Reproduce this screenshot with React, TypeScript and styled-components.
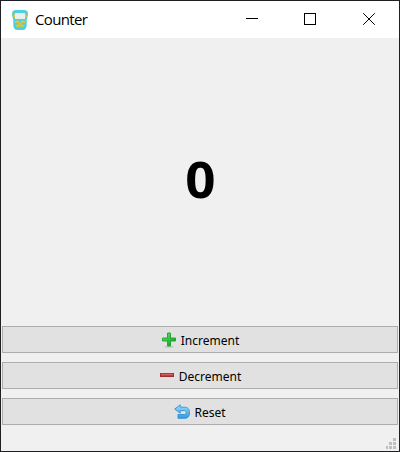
import React, { useState } from 'react';
import styled, { createGlobalStyle } from 'styled-components';

const GlobalStyle = createGlobalStyle`
  * { box-sizing: border-box; }
  body { margin: 0; overflow: hidden; }
`;

const Window = styled.div`
  display: flex;
  flex-direction: column;
  width: 400px;
  height: 452px;
  border: 1px solid #202024;
  background: #f0f0f0;
  color: #000;
`;

const TitleBar = styled.header`
  display: flex;
  align-items: center;
  height: 37px;
  flex: none;
  padding-left: 9px;
  background: #fff;
`;

const Title = styled.span`
  flex: 1;
  margin-left: 5px;
  padding-bottom: 2px;
  font: 15px/20px 'Open Sans', 'Noto Sans', sans-serif;
  letter-spacing: -0.65px;
`;

const Controls = styled.div`
  display: flex;
  margin-right: 1px;
`;

const ControlButton = styled.button<{ $inset: number }>`
  display: flex;
  align-items: center;
  justify-content: center;
  width: 58px;
  height: 37px;
  padding: 0 ${({ $inset }) => $inset}px 1px 0;
  border: 0;
  background: transparent;
`;

const Display = styled.main`
  display: flex;
  align-items: center;
  justify-content: center;
  flex: none;
  height: 288px;
  padding-bottom: 6px;
`;

const Value = styled.output`
  font: bold 50px/60px 'Noto Sans', sans-serif;
  transform: scaleX(1.06);
`;

const Actions = styled.div`
  display: flex;
  flex-direction: column;
  gap: 9px;
  padding: 0 1px;
`;

const ActionButton = styled.button`
  display: flex;
  align-items: center;
  justify-content: center;
  gap: 4px;
  height: 27px;
  padding: 0;
  border: 1px solid #adadad;
  background: #e1e1e1;
  color: #000;
`;

const Label = styled.span`
  font: 12px/16px 'Noto Sans', sans-serif;
  padding-top: 2px;
`;

const StatusBar = styled.footer`
  display: flex;
  flex: 1;
  align-items: flex-end;
  justify-content: flex-end;
  padding: 0 3px 2px 0;
`;

const Icon = styled.svg`
  display: block;
  flex: none;
`;

const AppIcon = () => (
  <Icon width="20" height="22" viewBox="0 0 20 22">
    <path d="M6 1H14Q18 1 18 5C18 8 16.700 9 16.700 12V16Q16.700 21 12.500 21H7.500Q3.300 21 3.300 16V12C3.300 9 2 8 2 5Q2 1 6 1Z" fill="#4dd0e1" />
    <path d="M3.300 5.200h2v3h-2zM14.700 5.200h2v3h-2z" fill="#ffc107" />
    <rect x="5" y="4" width="10" height="6" rx=".6" fill="#eceff1" />
    <path d="M5 11.700h4v2H5zM11 11.700h4v2h-4zM6.200 15.700h3.300v2H6.200zM10.500 15.700h3.300v2h-3.300zM8.500 13.700h3v2h-3z" fill="#ffc107" />
  </Icon>
);

const PlusIcon = () => (
  <Icon width="16" height="16" viewBox="0 0 16 16">
    <defs>
      <linearGradient id="plus" x1="0" y1="0" x2="1" y2="1">
        <stop offset="0" stopColor="#7fe08b" />
        <stop offset=".5" stopColor="#2fc13b" />
        <stop offset="1" stopColor="#16861c" />
      </linearGradient>
    </defs>
    <ellipse cx="8" cy="14.700" rx="5" ry=".8" fill="#bdbdbd" />
    <path d="M6.500 1h3v5h5v3h-5v5h-3V9h-5V6h5z" fill="url(#plus)" stroke="#27a637" />
  </Icon>
);

const MinusIcon = () => (
  <Icon width="16" height="16" viewBox="0 0 16 16">
    <rect x="1.500" y="5.500" width="13" height="3" fill="#c53c3c" stroke="#a52d30" />
    <path d="M2 6.300h12" stroke="#dd7777" strokeWidth=".8" />
  </Icon>
);

const UndoIcon = () => (
  <Icon width="16" height="16" viewBox="0 0 16 16">
    <defs>
      <linearGradient id="undo" x1="0" y1="0" x2="0" y2="1">
        <stop offset="0" stopColor="#9bdcff" />
        <stop offset="1" stopColor="#2e9be6" />
      </linearGradient>
    </defs>
    <path d="M6.200.8.7 5l5.500 4.200V6.600h4.300c1.200 0 1.700.6 1.700 1.900s-.6 2-1.900 2H4v3.800h7c3 0 4.500-2.200 4.500-5.500 0-3.900-1.800-5.600-5-5.600H6.200z" fill="url(#undo)" stroke="#2786cc" strokeWidth=".8" strokeLinejoin="round" />
  </Icon>
);

const SizeGrip = () => (
  <Icon width="10" height="11" viewBox="1 0 10 11" shapeRendering="crispEdges">
    <path d="M8 0h3v3H8zM4 4h3v3H4zM8 4h3v3H8zM1 8h2v3H1zM4 8h3v3H4zM8 8h3v3H8z" fill="#bfbfbf" />
  </Icon>
);

const controls = [
  { name: 'Minimize', path: 'M0 5.500h12', inset: 2 },
  { name: 'Maximize', path: 'M.5.5h11v11H.5z', inset: 2 },
  { name: 'Close', path: 'M.2.200l11.600 11.600M11.800.200.200 11.800', inset: 0 },
];

export default function App() {
  const [count, setCount] = useState(0);
  return (
    <>
      <GlobalStyle />
      <Window>
        <TitleBar>
          <AppIcon />
          <Title>Counter</Title>
          <Controls>
            {controls.map(({ name, path, inset }) => (
              <ControlButton key={name} aria-label={name} $inset={inset}>
                <Icon width="12" height="12" viewBox="0 0 12 12">
                  <path d={path} fill="none" stroke="#000" strokeWidth="1" shapeRendering={name === 'Close' ? 'auto' : 'crispEdges'} />
                </Icon>
              </ControlButton>
            ))}
          </Controls>
        </TitleBar>
        <Display><Value>{count}</Value></Display>
        <Actions>
          <ActionButton onClick={() => setCount(count + 1)}><PlusIcon /><Label>Increment</Label></ActionButton>
          <ActionButton onClick={() => setCount(count - 1)}><MinusIcon /><Label>Decrement</Label></ActionButton>
          <ActionButton onClick={() => setCount(0)}><UndoIcon /><Label>Reset</Label></ActionButton>
        </Actions>
        <StatusBar><SizeGrip /></StatusBar>
      </Window>
    </>
  );
}
